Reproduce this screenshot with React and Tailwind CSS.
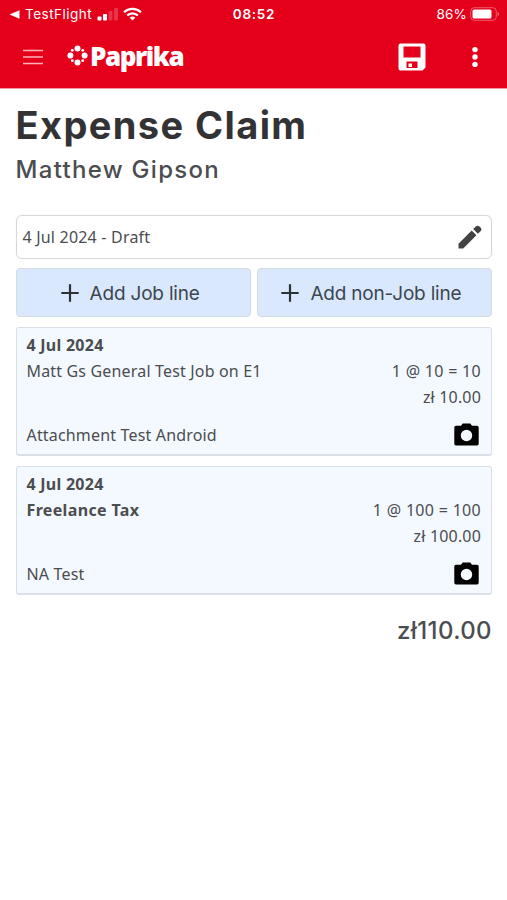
import React from "react";

const claimLines = [
  {
    id: 1,
    date: "4 Jul 2024",
    title: "Matt Gs General Test Job on E1",
    bold: false,
    quantity: "1 @ 10 = 10",
    amount: "zł 10.00",
    note: "Attachment Test Android",
  },
  {
    id: 2,
    date: "4 Jul 2024",
    title: "Freelance Tax",
    bold: true,
    quantity: "1 @ 100 = 100",
    amount: "zł 100.00",
    note: "NA Test",
  },
];

function StatusBar() {
  return (
    <div className="grid h-7 grid-cols-3 items-center pl-[9px] pr-[7px] font-['Inter',sans-serif] text-[13.5px] leading-none">
      <div className="flex items-center">
        <svg width="11" height="9" viewBox="0 0 11 9" fill="currentColor">
          <path d="M0.5 4.5L10.5 0.2v8.6z" />
        </svg>
        <span className="ml-[5px] pt-px tracking-[0.5px]">TestFlight</span>
        <svg className="ml-[5px] shrink-0" width="22" height="14" viewBox="0 0 22 14" fill="currentColor">
          <rect x="0.5" y="9.5" width="4" height="4" rx="0.8" />
          <rect x="6" y="7" width="4" height="6.5" rx="0.8" />
          <rect x="11.5" y="4" width="4" height="9.5" rx="0.8" opacity="0.2" />
          <rect x="17" y="1" width="4" height="12.5" rx="0.8" opacity="0.2" />
        </svg>
        <svg className="ml-[4px] shrink-0" width="19" height="14" viewBox="0 0 19 14" fill="none" stroke="currentColor" strokeWidth="2.3">
          <path d="M1.1 5.3a12 12 0 0 1 16.8 0" />
          <path d="M4.2 8.5a7.5 7.5 0 0 1 10.6 0" />
          <path d="M9.5 13.6L6.7 10.8a4 4 0 0 1 5.6 0z" fill="currentColor" stroke="none" />
        </svg>
      </div>
      <div className="pr-[1px] pt-px text-center font-semibold tracking-[0.7px]">08:52</div>
      <div className="flex items-center justify-end gap-[3px]">
        <span className="pt-px tracking-[0.2px]">86%</span>
        <svg width="30" height="14" viewBox="0 0 30 14">
          <rect x="0.7" y="0.7" width="25.6" height="12.6" rx="3.6" fill="none" stroke="#fff" strokeOpacity="0.35" />
          <rect x="2.5" y="2.5" width="19" height="9" rx="1.6" fill="#fff" />
          <path d="M27.7 4.8v4.4c1.7-.8 1.7-3.6 0-4.4z" fill="#fff" fillOpacity="0.5" />
        </svg>
      </div>
    </div>
  );
}

function Logo() {
  return (
    <div className="ml-6 flex items-center pb-[3px]">
      <svg width="21" height="21" viewBox="0 0 21 21" fill="currentColor">
        <circle cx="10.5" cy="3.4" r="3" />
        <circle cx="17.6" cy="10.5" r="3" />
        <circle cx="10.5" cy="17.6" r="3" />
        <circle cx="3.4" cy="10.5" r="3" />
        <circle cx="5.3" cy="5.3" r="1.4" />
        <circle cx="15.7" cy="5.3" r="1.4" />
        <circle cx="15.7" cy="15.7" r="1.4" />
        <circle cx="5.3" cy="15.7" r="1.4" />
      </svg>
      <span className="ml-[2px] font-['Open_Sans',sans-serif] text-[26px] font-extrabold leading-none tracking-[-1.45px]">
        Paprika
      </span>
    </div>
  );
}

function Toolbar() {
  return (
    <div className="flex h-[60px] items-center pb-[2px] pl-[23px] pr-[26px]">
      <button type="button" aria-label="Menu">
        <svg width="20" height="16" viewBox="0 0 20 16" stroke="#ffb3b8" strokeWidth="1.4">
          <path d="M0 1.5h20M0 8h20M0 14.5h20" />
        </svg>
      </button>
      <Logo />
      <button type="button" aria-label="Save" className="ml-auto">
        <svg width="28" height="28" viewBox="0 0 28 28">
          <path d="M2.5 0.5h23a2 2 0 0 1 2 2v22l-3 3H2.5a2 2 0 0 1-2-2v-23a2 2 0 0 1 2-2z" fill="#fff" />
          <path d="M5.5 3.5h17v11h-17zM8.5 18.5h11v6.5h-11z" fill="#e4001b" />
          <rect x="10.5" y="20.5" width="3.5" height="3.5" fill="#fff" />
        </svg>
      </button>
      <button type="button" aria-label="More" className="ml-[43px]">
        <svg width="12" height="22" viewBox="0 0 12 22" fill="#fff">
          <circle cx="6" cy="3.6" r="2.7" />
          <circle cx="6" cy="11" r="2.7" />
          <circle cx="6" cy="18.4" r="2.7" />
        </svg>
      </button>
    </div>
  );
}

function AddButton({ label }) {
  return (
    <button
      type="button"
      className="flex h-[49px] flex-1 items-center justify-center gap-[11px] rounded-[4px] border border-[#d3dbe4] bg-[#dae8fd] pr-[6px] font-['Inter',sans-serif] text-[19px] text-[#3c464e]"
    >
      <svg width="18" height="18" viewBox="0 0 18 18" stroke="#2b3136" strokeWidth="2.2">
        <path d="M9 0.3v17.4M0.3 9h17.4" />
      </svg>
      <span className="pt-[4px] tracking-[-0.2px]">{label}</span>
    </button>
  );
}

function CameraIcon() {
  return (
    <svg className="mt-px" width="25" height="23" viewBox="0 0 25 23">
      <path d="M2 2.8h5L8.7 0.5h7.6L18 2.8h5a1.7 1.7 0 0 1 1.7 1.7v16.3a1.7 1.7 0 0 1-1.7 1.7H2a1.7 1.7 0 0 1-1.7-1.7V4.5A1.7 1.7 0 0 1 2 2.8z" fill="#000" />
      <circle cx="12.5" cy="12.5" r="5.7" fill="#f5faff" />
    </svg>
  );
}

function ClaimLine({ line }) {
  return (
    <div className="h-[129px] rounded-[3px] border border-b-2 border-[#d9e0e8] bg-[#f4f9ff] pl-[10px] pr-[10px] pt-[4px] leading-[26px]">
      <div className="font-bold tracking-[0.25px]">{line.date}</div>
      <div className="flex justify-between">
        <span className={line.bold ? "font-bold tracking-[0.35px]" : ""}>{line.title}</span>
        <span className="tracking-[0.3px]">{line.quantity}</span>
      </div>
      <div className="text-right">{line.amount}</div>
      <div className="mt-[12px] flex items-start justify-between pr-[2px]">
        <span>{line.note}</span>
        <CameraIcon />
      </div>
    </div>
  );
}

export default function App() {
  return (
    <div className="min-h-[900px] w-full bg-white font-['Noto_Sans',sans-serif] text-base tracking-[0.17px] text-[#4b4d50]">
      <header className="h-[89px] border-b border-[#f29aa3] bg-[#e4001b] text-white">
        <StatusBar />
        <Toolbar />
      </header>

      <main className="pl-[15.5px] pr-[15px]">
        <h1 className="pt-[13px] font-['Inter',sans-serif] text-[38px] font-bold leading-[46px] tracking-[1.4px] text-[#333335]">
          Expense Claim
        </h1>
        <h2 className="pt-px font-['Inter',sans-serif] text-[24px] font-medium leading-[41px] tracking-[1.3px]">
          Matthew Gipson
        </h2>

        <div className="mt-[25px] flex h-[44px] items-center justify-between rounded-[6px] border-[1.5px] border-[#d6d7d9] pl-[6px] pr-[9px] shadow-[0_0_1px_#d6d7d9]">
          <span className="tracking-[0.2px]">4 Jul 2024 - Draft</span>
          <svg width="24" height="24" viewBox="0 0 24 24" fill="#424244">
            <path d="M0.5 18.8v4.7h4.7L18.4 10.3l-4.7-4.7z" />
            <path d="M15.2 4.1l2.6-2.6a2.6 2.6 0 0 1 3.6 0l1.1 1.1a2.6 2.6 0 0 1 0 3.6l-2.6 2.6z" />
          </svg>
        </div>

        <div className="mt-[9px] flex gap-[6px]">
          <AddButton label="Add Job line" />
          <AddButton label="Add non-Job line" />
        </div>

        <div className="mt-[10px] flex flex-col gap-[10px]">
          {claimLines.map((line) => (
            <ClaimLine key={line.id} line={line} />
          ))}
        </div>

        <div className="mt-[16px] text-right font-['Inter',sans-serif] text-[24px] font-medium leading-[40px] tracking-[0.4px]">
          zł110.00
        </div>
      </main>
    </div>
  );
}
